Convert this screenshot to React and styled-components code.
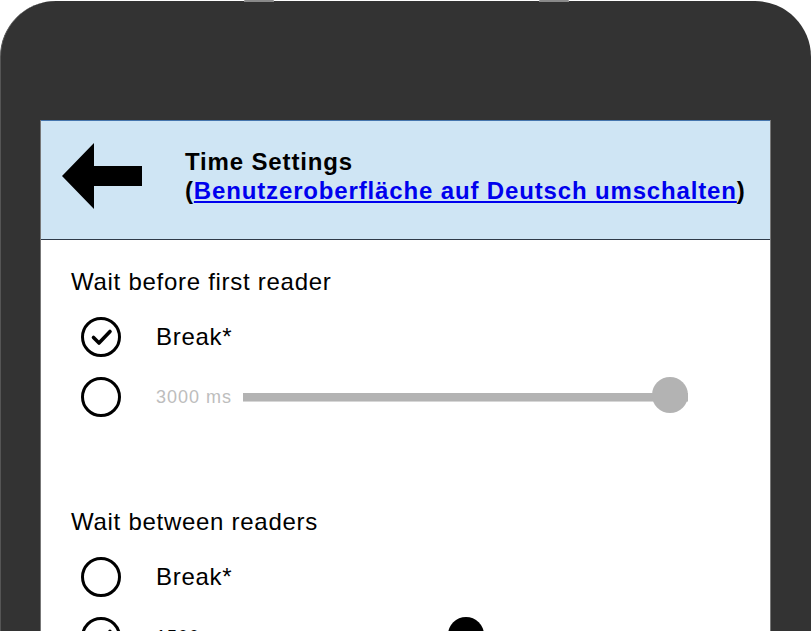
import React from 'react';
import styled, { createGlobalStyle } from 'styled-components';

const GlobalStyle = createGlobalStyle`
  html, body {
    margin: 0;
    padding: 0;
    background: #ffffff;
    font-family: "Liberation Sans", Arial, sans-serif;
  }
  body {
    width: 811px;
    height: 631px;
    overflow: hidden;
  }
`;

const sections = [
  {
    title: 'Wait before first reader',
    choice: 'break',
    value: 3000,
    max: 3000,
  },
  {
    title: 'Wait between readers',
    choice: 'time',
    value: 1500,
    max: 3000,
  },
];

function Radio({ checked }) {
  return (
    <RadioIcon viewBox="0 0 40 40" width="40" height="40">
      <circle cx="20" cy="20" r="18.5" fill="none" stroke="#000" strokeWidth="3" />
      {checked && (
        <polyline
          points="12.5,20.5 18,26 29,14.5"
          fill="none"
          stroke="#000"
          strokeWidth="3.6"
          strokeLinecap="round"
          strokeLinejoin="round"
        />
      )}
    </RadioIcon>
  );
}

function Slider({ value, max, active }) {
  const pct = value / max;
  return (
    <SliderBox>
      <Track $active={active}>
        <Thumb $active={active} style={{ left: `calc(${pct * 100}% - ${pct * 36}px)` }} />
      </Track>
    </SliderBox>
  );
}

function Section({ title, choice, value, max }) {
  const timed = choice === 'time';
  return (
    <SectionBox>
      <SectionTitle>{title}</SectionTitle>
      <Row>
        <Radio checked={!timed} />
        <Label>Break*</Label>
      </Row>
      <Row>
        <Radio checked={timed} />
        <MsLabel $active={timed}>{value} ms</MsLabel>
        <Slider value={value} max={max} active={timed} />
      </Row>
    </SectionBox>
  );
}

export default function App() {
  return (
    <>
      <GlobalStyle />
      <Phone>
        <SideButton $left={243} />
        <SideButton $left={538} />
        <Screen>
          <Header>
            <BackArrow viewBox="0 0 80 66" width="80" height="66">
              <polygon points="0,33 32,0 32,23 80,23 80,43 32,43 32,66" fill="#000" />
            </BackArrow>
            <HeaderText>
              <Title>Time Settings</Title>
              <Switch>
                (<a href="#de">Benutzeroberfläche auf Deutsch umschalten</a>)
              </Switch>
            </HeaderText>
          </Header>
          <Content>
            {sections.map((s) => (
              <Section key={s.title} {...s} />
            ))}
          </Content>
        </Screen>
      </Phone>
    </>
  );
}

const Phone = styled.div`
  position: relative;
  box-sizing: border-box;
  width: 811px;
  height: 630px;
  margin-top: 1px;
  padding: 119px 40px 0 40px;
  background: #333333;
  border-left: 1px solid #555555;
  border-radius: 56px 56px 0 0;
  display: flex;
  flex-direction: column;
`;

const SideButton = styled.div`
  position: absolute;
  top: -1px;
  left: ${(p) => p.$left}px;
  width: 30px;
  height: 2px;
  background: #8a8a8a;
  border-radius: 1px 1px 0 0;
`;

const Screen = styled.div`
  flex: 1;
  min-height: 0;
  background: #ffffff;
  border-left: 1px solid #777777;
  border-right: 1px solid #777777;
  margin-left: -1px;
  display: flex;
  flex-direction: column;
  overflow: hidden;
`;

const Header = styled.div`
  box-sizing: border-box;
  flex-shrink: 0;
  height: 120px;
  margin: 0 -1px;
  background: #cfe5f4;
  border: 1px solid #4575ad;
  border-bottom-color: #2f3a48;
  display: flex;
  align-items: flex-start;
  padding: 22px 0 0 21px;
`;

const BackArrow = styled.svg`
  display: block;
  flex-shrink: 0;
`;

const HeaderText = styled.div`
  margin-left: 43px;
  padding-top: 5px;
  font-size: 24px;
  line-height: 28px;
  font-weight: bold;
  letter-spacing: 0.85px;
  color: #000;
`;

const Title = styled.div``;

const Switch = styled.div`
  padding-top: 1px;
  a {
    color: #0000ee;
    text-decoration: underline;
  }
`;

const Content = styled.div`
  flex-shrink: 0;
  padding: 28px 30px 0 30px;
  display: flex;
  flex-direction: column;
  gap: 81px;
`;

const SectionBox = styled.div`
  display: flex;
  flex-direction: column;
`;

const SectionTitle = styled.div`
  font-size: 24px;
  line-height: 28px;
  letter-spacing: 0.72px;
  color: #000;
  margin-bottom: 11px;
`;

const Row = styled.div`
  height: 60px;
  display: flex;
  align-items: center;
  padding-left: 10px;
`;

const RadioIcon = styled.svg`
  display: block;
  flex-shrink: 0;
  margin-right: 35px;
`;

const Label = styled.span`
  font-size: 24px;
  letter-spacing: 0.7px;
  color: #000;
`;

const MsLabel = styled.span`
  font-size: 18px;
  letter-spacing: 1px;
  color: ${(p) => (p.$active ? '#000' : '#bdbdbd')};
  white-space: nowrap;
  margin-right: 11px;
`;

const SliderBox = styled.div`
  width: 445px;
  height: 36px;
  display: flex;
  align-items: center;
  margin-top: -6px;
`;

const Track = styled.div`
  position: relative;
  width: 100%;
  height: 8px;
  margin-top: 6px;
  background: ${(p) => (p.$active ? '#000' : '#b3b3b3')};
  border-bottom: 1px solid ${(p) => (p.$active ? '#000' : '#d6d6d6')};
`;

const Thumb = styled.div`
  position: absolute;
  top: -16px;
  width: 36px;
  height: 36px;
  border-radius: 50%;
  background: ${(p) => (p.$active ? '#000' : '#b3b3b3')};
`;
